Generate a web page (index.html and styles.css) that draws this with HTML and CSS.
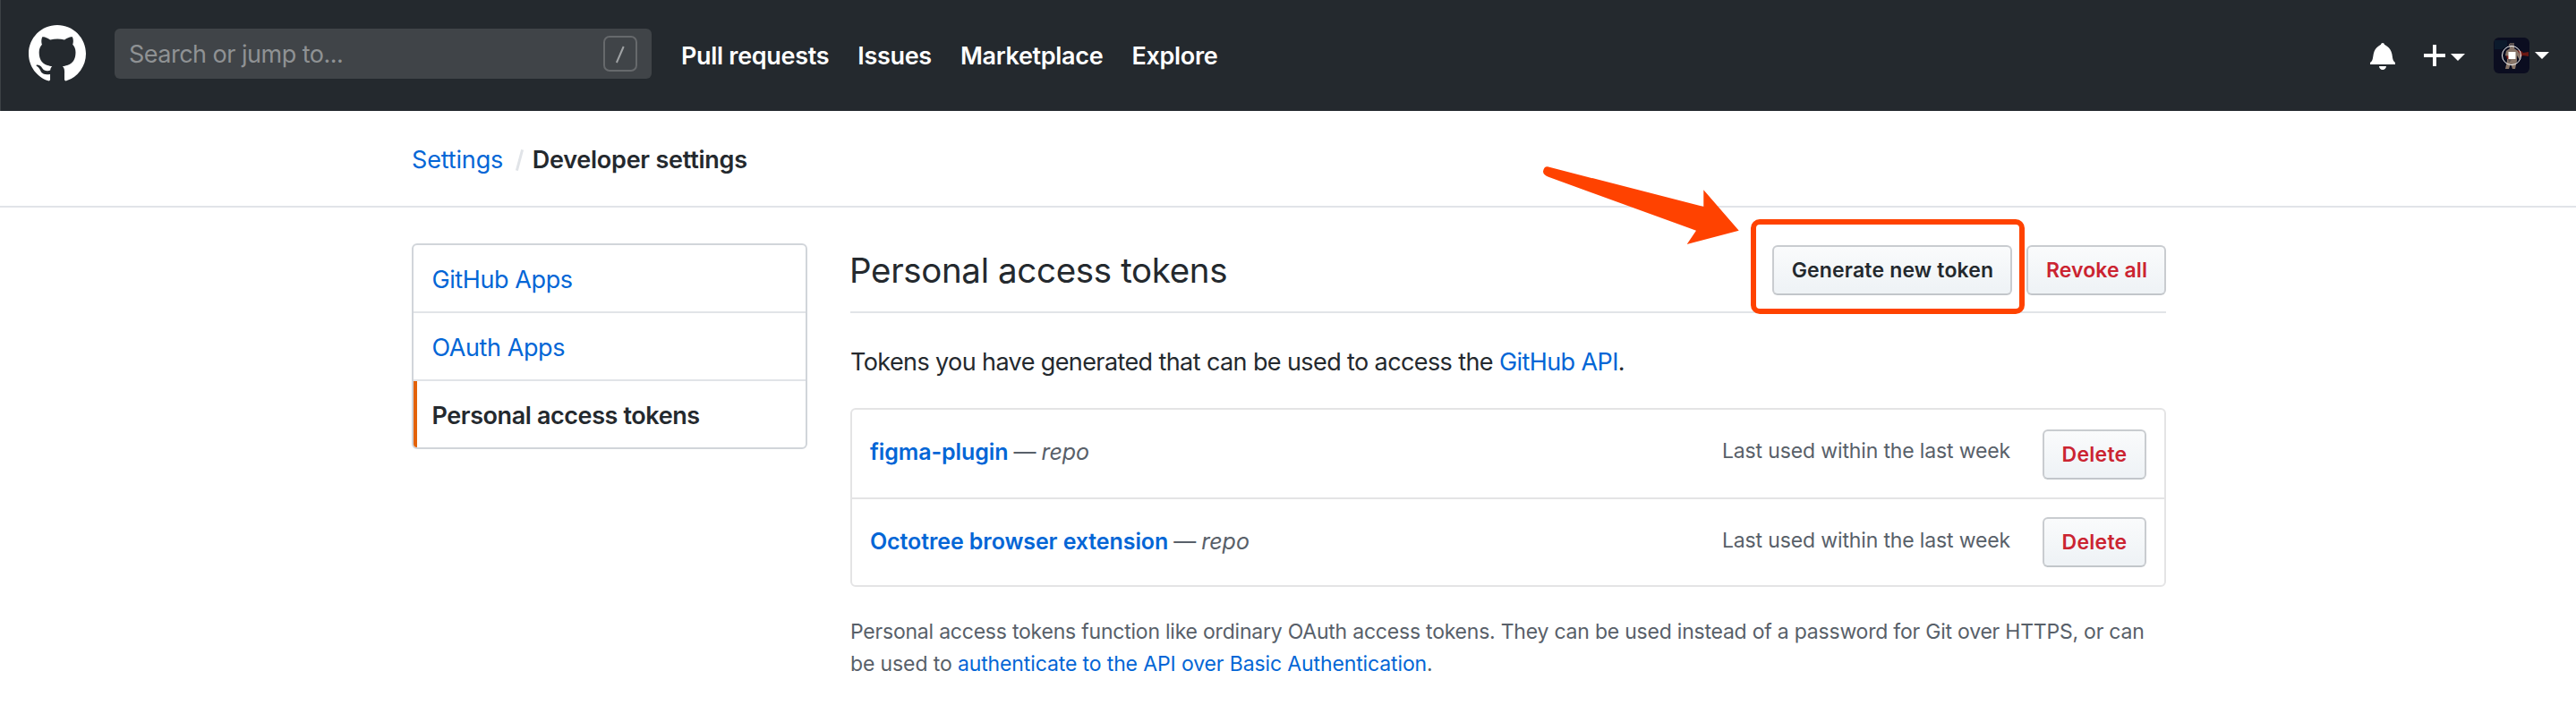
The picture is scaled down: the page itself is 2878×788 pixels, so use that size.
FILE: index.html
```html
<!DOCTYPE html>
<html lang="en">
<head>
<meta charset="utf-8">
<title>Personal access tokens</title>
<link rel="stylesheet" href="styles.css">
</head>
<body>
<header class="header">
  <svg class="logo" viewBox="0 0 16 16"><path fill-rule="evenodd" d="M8 0C3.58 0 0 3.58 0 8c0 3.54 2.29 6.53 5.47 7.59.4.07.55-.17.55-.38 0-.19-.01-.82-.01-1.49-2.01.37-2.53-.49-2.69-.94-.09-.23-.48-.94-.82-1.13-.28-.15-.68-.52-.01-.53.63-.01 1.08.58 1.23.82.72 1.21 1.87.87 2.33.66.07-.52.28-.87.51-1.07-1.78-.2-3.64-.89-3.64-3.95 0-.87.31-1.59.82-2.15-.08-.2-.36-1.02.08-2.12 0 0 .67-.21 2.2.82.64-.18 1.32-.27 2-.27.68 0 1.36.09 2 .27 1.53-1.04 2.2-.82 2.2-.82.44 1.1.16 1.92.08 2.12.51.56.82 1.27.82 2.15 0 3.07-1.87 3.75-3.65 3.95.29.25.54.73.54 1.48 0 1.07-.01 1.93-.01 2.2 0 .21.15.46.55.38A8.013 8.013 0 0016 8c0-4.42-3.58-8-8-8z"/></svg>
  <div class="search">
    <span class="search-text">Search or jump to...</span>
    <svg class="key" viewBox="0 0 38 40"><rect x="1" y="1" width="36" height="38" rx="6"/><path d="M14.9 30L22.7 12"/></svg>
  </div>
  <nav class="nav">
    <a>Pull requests</a><a>Issues</a><a>Marketplace</a><a>Explore</a>
  </nav>
  <div class="actions">
    <svg class="bell" viewBox="0 0 14 16"><path d="M14 12v1H0v-1l.73-.58c.77-.77.81-2.55 1.19-4.42C2.69 3.23 6 2 6 2c0-.55.45-1 1-1s1 .45 1 1c0 0 3.39 1.23 4.16 5 .38 1.88.42 3.66 1.19 4.42l.66.58H14zm-7 4c1.11 0 2-.89 2-2H5c0 1.11.89 2 2 2z"/></svg>
    <svg class="plus" viewBox="0 0 24 24"><path d="M10 0h4v10h10v4H14v10h-4V14H0v-4h10z"/></svg>
    <svg class="caret caret-plus" viewBox="0 0 16 8"><path d="M0 0h16L8 8z"/></svg>
    <svg class="avatar" viewBox="0 0 40 40">
      <rect width="40" height="40" rx="6" fill="#0b0d20"/>
      <path d="M1 3h14v7l-6 3H1z" fill="#0c1a2c"/>
      <path d="M25 14l6 1 2 2 6-1v5l-6-1-4 2-3-4z" fill="#6b1712"/>
      <path d="M17 7h6v5l4 3 3 5-1 5-3-5v6l-2 9h-3l-2-6-2 6h-4l2-9v-5l-2-1 1-5 4-3z" fill="#877468"/>
      <path d="M18 6h5v3h-5zM16 24l4 1-3 3z" fill="#5b5150"/>
      <path d="M14 20l4 1v3h-3z" fill="#7c1c16"/>
      <circle cx="20" cy="20" r="10.5" fill="none" stroke="#f4f4f6" stroke-width="1"/>
      <rect x="16.5" y="16" width="8" height="8" fill="#fff"/>
    </svg>
    <svg class="caret caret-avatar" viewBox="0 0 16 8"><path d="M0 0h16L8 8z"/></svg>
  </div>
</header>

<div class="crumbs">
  <a class="crumb-link">Settings</a><span class="crumb-sep"></span><strong class="crumb-current">Developer settings</strong>
</div>

<main class="page">
  <nav class="menu">
    <a class="menu-item">GitHub Apps</a>
    <a class="menu-item">OAuth Apps</a>
    <a class="menu-item selected">Personal access tokens</a>
  </nav>

  <section class="content">
    <div class="subhead">
      <h1 class="title">Personal access tokens</h1>
      <div class="buttons">
        <div class="highlighted">
          <button class="btn btn-generate">Generate new token</button>
          <span class="frame"></span>
          <svg class="arrow" viewBox="0 0 230 100"><path d="M9 6.3L183.3 51V32.3L222.7 77.7 164.7 93 175 77.7 10 17.7Q4 15.500 4 11.500Q5 6 9 6.300z"/></svg>
        </div>
        <button class="btn btn-revoke danger">Revoke all</button>
      </div>
    </div>

    <p class="intro">Tokens you have generated that can be used to access the <a>GitHub API</a>.</p>

    <div class="tokens">
      <div class="token">
        <div class="token-name"><strong>figma-plugin</strong><span class="dash">—</span><em>repo</em></div>
        <span class="used">Last used within the last week</span>
        <button class="btn btn-delete danger">Delete</button>
      </div>
      <div class="token">
        <div class="token-name"><strong>Octotree browser extension</strong><span class="dash">—</span><em>repo</em></div>
        <span class="used">Last used within the last week</span>
        <button class="btn btn-delete danger">Delete</button>
      </div>
    </div>

    <p class="help">Personal access tokens function like ordinary OAuth access tokens. They can be used instead of a password for Git over HTTPS, or can<br><span class="help-end">be used to <a>authenticate to the API over Basic Authentication</a>.</span></p>
  </section>
</main>
</body>
</html>
```
FILE: styles.css
```css
* { box-sizing: border-box; }
body {
  margin: 0;
  background: #fff;
  color: #24292e;
  font-family: Inter, "Liberation Sans", sans-serif;
  font-size: 27px;
}
a { color: #0366d6; text-decoration: none; }
h1, p { margin: 0; font-weight: 400; }
svg { display: block; flex: none; }

.header {
  display: flex;
  align-items: center;
  height: 124px;
  padding: 0 30px 0 32px;
  background: #24292e;
  box-shadow: inset 1px 0 #3c4145;
}
.logo { width: 64px; height: 64px; margin: 0 32px 4px 0; fill: #fff; }
.search {
  display: flex;
  align-items: center;
  justify-content: space-between;
  width: 600px;
  height: 56px;
  margin-bottom: 4px;
  padding: 0 16px;
  border-radius: 6px;
  background: #404448;
}
.search-text { color: #8f9294; letter-spacing: -0.51px; }
.key { width: 38px; height: 40px; fill: none; stroke: #66696c; stroke-width: 2; }
.key path { stroke: #a0a3a5; }
.nav { display: flex; gap: 32px; margin-left: 33px; }
.nav a { color: #fff; font-weight: 600; letter-spacing: -0.31px; }
.actions { display: flex; align-items: center; margin-left: auto; fill: #fff; }
.bell { width: 28px; height: 32px; margin-right: 32px; }
.plus { width: 24px; height: 24px; margin-right: 6px; }
.caret { width: 16px; height: 8px; }
.caret-plus { margin: 4px 32px 0 0; }
.avatar { width: 40px; height: 40px; margin-right: 6px; }

.crumbs {
  display: flex;
  align-items: center;
  height: 108px;
  padding: 2px 0 0 460px;
  border-bottom: 2px solid #e1e4e8;
}
.crumb-link { letter-spacing: -0.15px; }
.crumb-sep {
  width: 3px;
  height: 24px;
  margin: 2px 13px 0 16.5px;
  background: #e1e4e8;
  transform: rotate(15deg);
}
.crumb-current { font-weight: 600; letter-spacing: -0.24px; }

.page { display: flex; align-items: flex-start; gap: 48px; padding: 40px 0 0 460px; }
.menu {
  width: 442px;
  border: 2px solid #d1d5da;
  border-radius: 6px;
  overflow: hidden;
}
.menu-item {
  display: flex;
  align-items: center;
  height: 76px;
  padding: 2px 0 0 20.5px;
  border-bottom: 2px solid #e1e4e8;
  letter-spacing: -0.41px;
}
.menu-item.selected {
  height: 74px;
  border-bottom: 0;
  color: #24292e;
  font-weight: 600;
  box-shadow: inset 4px 0 #e36209;
}

.content { width: 1470px; }
.subhead {
  display: flex;
  align-items: center;
  justify-content: space-between;
  padding: 2px 0 18px;
  border-bottom: 2px solid #e1e4e8;
}
.title { margin-left: -1px; font-size: 38.5px; line-height: 56px; letter-spacing: -0.35px; }
.buttons { display: flex; gap: 16px; }
.btn {
  display: block;
  height: 56px;
  padding: 0;
  border: 2px solid #c9ccd0;
  border-bottom-color: #c2c6ca;
  border-radius: 6px;
  background: linear-gradient(#fafbfc, #eff3f6 90%);
  color: #24292e;
  font: 600 23px/52px Inter, "Liberation Sans", sans-serif;
  letter-spacing: 0.18px;
}
.danger { color: #cb2431; }
.btn-generate { width: 268px; padding-left: 1px; }
.btn-revoke { width: 156px; padding-left: 1px; letter-spacing: 0.09px; }
.btn-delete { width: 116px; letter-spacing: 0.26px; }

.highlighted { position: relative; }
.frame {
  position: absolute;
  left: -24.5px;
  top: -29px;
  width: 306px;
  height: 106px;
  border: 6px solid #ff4200;
  border-radius: 10px;
}
.arrow { position: absolute; left: -260px; top: -94px; width: 230px; height: 100px; fill: #ff4200; }

.intro { padding: 34px 0 30px; line-height: 42px; letter-spacing: -0.6px; white-space: nowrap; }

.tokens { border: 2px solid #e4e4e5; border-radius: 6px; }
.token { display: flex; align-items: flex-start; height: 96px; padding: 20px; }
.token:first-child { height: 100px; padding-top: 22px; border-bottom: 2px solid #e4e4e5; }
.token-name {
  display: flex;
  flex: 1;
  color: #586069;
  font-size: 25px;
  line-height: 40px;
  padding-top: 7px;
}
.token:first-child .token-name { padding-top: 5px; }
.token-name strong { color: #0366d6; font-weight: 600; letter-spacing: -0.09px; }
.dash { margin: 0 6px; }
.used {
  margin-right: 36px;
  padding-top: 6px;
  color: #586069;
  font-size: 23px;
  line-height: 40px;
  letter-spacing: -0.145px;
}
.token:first-child .used { padding-top: 4px; }

.help {
  margin: 32px 0 0;
  color: #586069;
  font-size: 23px;
  line-height: 36px;
  letter-spacing: -0.22px;
  white-space: nowrap;
}
.help-end { letter-spacing: -0.12px; }
```
